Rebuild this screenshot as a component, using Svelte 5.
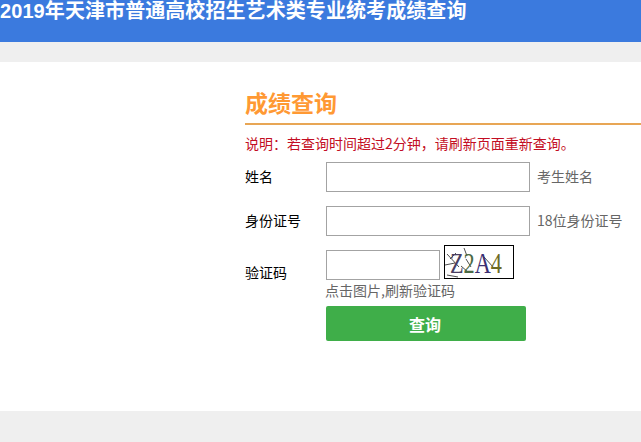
<script>
	let name = '';
	let idCard = '';
	let code = '';
</script>

<div class="page">
	<header class="top">
		<h1>2019年天津市普通高校招生艺术类专业统考成绩查询</h1>
	</header>

	<div class="band"></div>

	<main class="main">
		<section class="panel">
			<h2>成绩查询</h2>
			<p class="note">说明：若查询时间超过2分钟，请刷新页面重新查询。</p>

			<div class="row">
				<label for="xm">姓名</label>
				<input id="xm" class="wide" bind:value={name} />
				<span class="hint">考生姓名</span>
			</div>

			<div class="row">
				<label for="sfz">身份证号</label>
				<input id="sfz" class="wide" bind:value={idCard} />
				<span class="hint">18位身份证号</span>
			</div>

			<div class="row code-row">
				<label for="yzm">验证码</label>
				<div class="code-box">
					<div class="code-line">
						<input id="yzm" class="short" bind:value={code} />
						<svg class="captcha" width="70" height="34" viewBox="0 0 70 34" role="img" aria-label="验证码图片">
							<rect x="0.5" y="0.5" width="69" height="33" fill="#fff" stroke="#000" />
							<g fill="none" stroke="#222" stroke-width="0.8">
								<path d="M3 9 L15 22 M1 20 L11 18 M3 30 L14 32 M17 21 L24 27 M20 3 L23 11 M12 8 L6 14 M22 14 L27 22 M40 12 L50 23" />
							</g>
							<text x="6" y="28" class="glyph" textLength="52" lengthAdjust="spacingAndGlyphs"><tspan fill="#4a3f63">Z</tspan><tspan fill="#4b6b45">2</tspan><tspan fill="#3b2f73">A</tspan><tspan fill="#6d6a24">4</tspan></text>
						</svg>
					</div>
					<span class="refresh">点击图片,刷新验证码</span>
				</div>
			</div>

			<button class="submit" type="button">查询</button>
		</section>
	</main>

	<footer class="bottom"></footer>
</div>

<style>
	:global(body) {
		margin: 0;
		background: #fff;
		overflow: hidden;
	}

	.page {
		height: 442px;
		display: flex;
		flex-direction: column;
		font-family: "Noto Sans CJK SC", "Liberation Sans", sans-serif;
		font-size: 14px;
		overflow: hidden;
	}

	.top {
		height: 42px;
		flex: none;
		background: #3b7ade;
		overflow: hidden;
	}

	h1 {
		margin: -3px 0 0;
		font-family: "Liberation Sans", "Noto Sans CJK SC", sans-serif;
		font-size: 20px;
		line-height: 28px;
		font-weight: 700;
		color: #fff;
		white-space: nowrap;
		letter-spacing: 0.08px;
	}

	.band {
		height: 20px;
		flex: none;
		background: #efefef;
	}

	.main {
		flex: 1;
		padding-left: 245px;
		overflow: hidden;
	}

	.panel {
		width: 396px;
	}

	h2 {
		margin: 0;
		padding-top: 25px;
		height: 36px;
		border-bottom: 2px solid #e8a655;
		font-size: 23px;
		line-height: 30px;
		font-weight: 700;
		color: #ff9933;
		box-sizing: content-box;
	}

	.note {
		margin: 8px 0 0;
		font-size: 14px;
		line-height: 20px;
		color: #c30d23;
		white-space: nowrap;
	}

	.row {
		display: flex;
		align-items: center;
		margin-top: 9px;
		height: 30px;
		color: #000;
		font-size: 14px;
	}

	.row + .row {
		margin-top: 14px;
	}

	label {
		width: 81px;
		flex: none;
		position: relative;
		top: -1px;
	}

	input {
		box-sizing: border-box;
		height: 30px;
		border: 1px solid #a3a3a3;
		background: #fff;
		padding: 0 4px;
		outline: none;
	}

	.wide {
		width: 204px;
	}

	.short {
		width: 114px;
	}

	.hint {
		margin-left: 7px;
		font-size: 14px;
		color: #666;
		white-space: nowrap;
		position: relative;
		top: -1px;
	}

	.code-row {
		height: auto;
		align-items: flex-start;
	}

	.code-row label {
		padding-top: 13px;
	}

	.code-line {
		display: flex;
		align-items: flex-start;
		gap: 4px;
	}

	.captcha {
		display: block;
		margin-top: -5px;
	}

	.glyph {
		font-family: "Liberation Serif", serif;
		font-size: 30px;
	}

	.refresh {
		display: block;
		margin-left: -1px;
		font-size: 14px;
		line-height: 20px;
		color: #666;
		white-space: nowrap;
	}

	.submit {
		display: block;
		margin: 6px 0 0 81px;
		width: 200px;
		height: 35px;
		border: 0;
		border-radius: 2px;
		background: #3fae49;
		color: #fff;
		font-family: inherit;
		font-size: 16px;
		font-weight: 700;
		padding: 0 2px 0 0;
	}

	.bottom {
		height: 31px;
		flex: none;
		background: #efefef;
	}
</style>
